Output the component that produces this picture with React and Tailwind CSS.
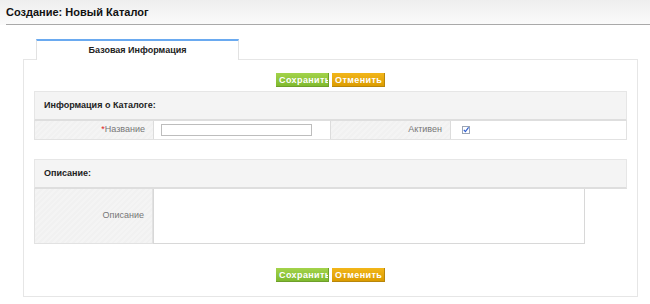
import React from "react";

function Btn({ children, color }) {
  const cls =
    color === "green"
      ? "bg-gradient-to-b from-[#a3d34a] to-[#7fba2e] border-[#6e9f2a]"
      : "bg-gradient-to-b from-[#f2b619] to-[#dc9c00] border-[#b8860b]";
  return (
    <div
      className={`h-[14px] w-[53px] overflow-hidden whitespace-nowrap border-b border-r ${cls} text-white font-bold text-[9px] leading-[14px] tracking-[0.4px] pl-[3px]`}
    >
      {children}
    </div>
  );
}

function Buttons() {
  return (
    <div className="flex justify-center gap-[3px]">
      <Btn color="green">Сохранить</Btn>
      <Btn color="orange">Отменить</Btn>
    </div>
  );
}

function SectionHeader({ children }) {
  return (
    <div className="h-[30px] bg-[#f4f4f4] border border-[#e6e6e6] border-b-2 border-b-[#dedede] flex items-center pl-[9px] text-[9px] font-bold text-[#222]">
      {children}
    </div>
  );
}

const labelCls =
  "bg-[repeating-linear-gradient(135deg,#f1f1f1_0px,#f1f1f1_2px,#f4f4f4_2px,#f4f4f4_4px)] border-r border-[#dcdcdc] flex items-center justify-end pr-[8px] text-[9px] text-[#777]";

export default function App() {
  return (
    <div className="w-[650px] h-[304px] bg-white overflow-hidden font-['Liberation_Sans',Arial,sans-serif]">
      <div className="h-[25px] bg-gradient-to-b from-[#eeeeee] to-[#fbfbfb] pl-[6px]">
        <div className="h-[25px] border-b border-[#a9a9a9] flex items-center text-[11px] font-bold text-[#111] pt-[1px]">
          Создание: Новый Каталог
        </div>
      </div>

      <div className="mt-[14px] relative z-10 ml-[36px] w-[203px] h-[21px] -mb-px bg-white border-t-2 border-t-[#6aaaf0] border-l border-r border-[#e2e2e2] flex items-center justify-center text-[9px] font-bold text-[#222]">
        Базовая Информация
      </div>

      <div className="ml-[23px] w-[615px] border border-[#e6e6e6] pt-[13px] pb-[14px] px-[10px]">
        <Buttons />

        <div className="mt-[4px]">
          <SectionHeader>Информация о Каталоге:</SectionHeader>
          <div className="h-[19px] grid grid-cols-[119px_177px_120px_1fr] border-x border-b border-[#e2e2e2]">
            <div className={labelCls}>
              <span className="text-[#e02020]">*</span>Название
            </div>
            <div className="flex items-center pl-[7px] border-r border-[#dcdcdc]">
              <div className="w-[151px] h-[12px] border border-[#bdbdbd] bg-white" />
            </div>
            <div className={labelCls}>Активен</div>
            <div className="flex items-center pl-[11px]">
              <svg width="8" height="8" viewBox="0 0 8 8">
                <rect x="0.5" y="0.5" width="7" height="7" fill="#fff" stroke="#9aa4b4" />
                <path d="M1.8 3.8 L3.4 5.6 L6.6 1.4" fill="none" stroke="#2f5fd0" strokeWidth="1.2" />
              </svg>
            </div>
          </div>
        </div>

        <div className="mt-[19px]">
          <SectionHeader>Описание:</SectionHeader>
          <div className="h-[55px] flex">
            <div className={`w-[119px] border-l border-b border-[#e2e2e2] ${labelCls}`}>Описание</div>
            <div className="w-[432px] border border-t-0 border-[#d8d8d8] bg-white" />
          </div>
        </div>

        <div className="mt-[24px]">
          <Buttons />
        </div>
      </div>
    </div>
  );
}
